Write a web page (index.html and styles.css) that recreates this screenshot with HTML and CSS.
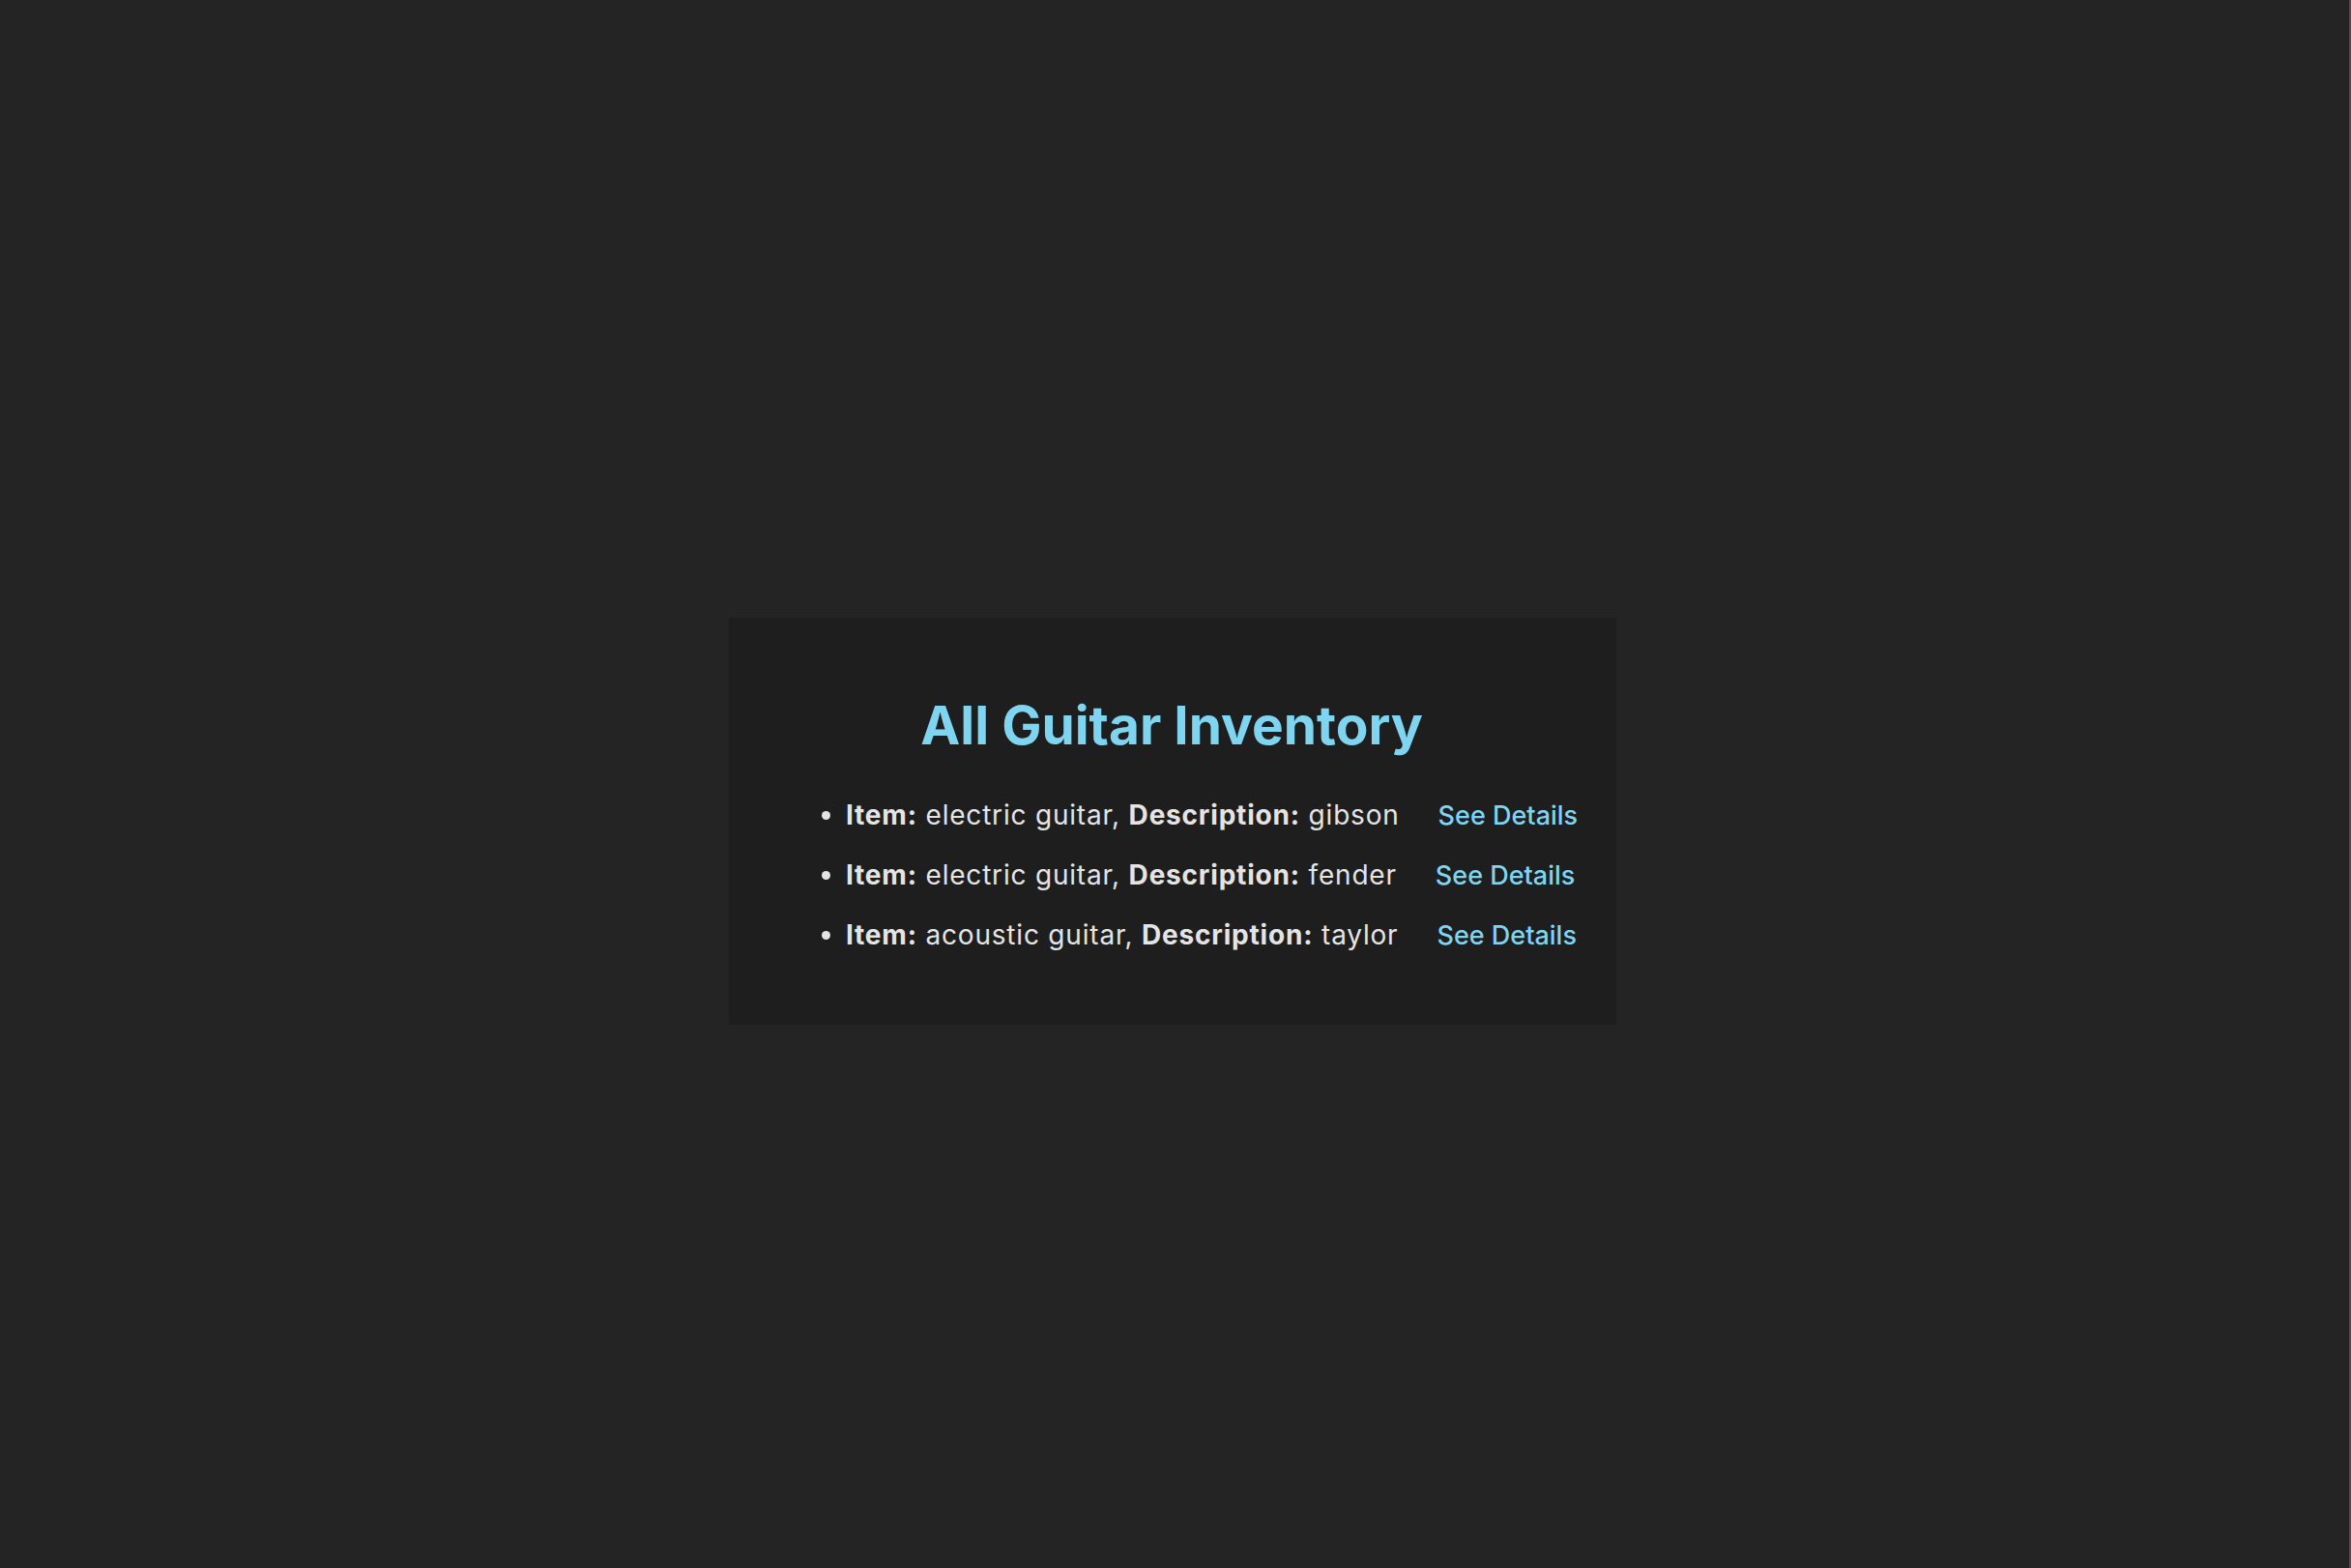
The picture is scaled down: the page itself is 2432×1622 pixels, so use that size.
FILE: index.html
```html
<!DOCTYPE html>
<html lang="en">
<head>
<meta charset="utf-8">
<title>All Guitar Inventory</title>
<link rel="stylesheet" href="styles.css">
</head>
<body>
<main class="page">
  <section class="card">
    <h1 class="title">All Guitar Inventory</h1>
    <ul class="inventory">
      <li class="row"><span class="desc"><b>Item:</b> electric guitar, <b>Description:</b> gibson</span><a class="link" href="#">See Details</a></li>
      <li class="row"><span class="desc"><b>Item:</b> electric guitar, <b>Description:</b> fender</span><a class="link" href="#">See Details</a></li>
      <li class="row"><span class="desc"><b>Item:</b> acoustic guitar, <b>Description:</b> taylor</span><a class="link" href="#">See Details</a></li>
    </ul>
  </section>
</main>
</body>
</html>
```

FILE: styles.css
```css
html {
  background: #242424;
  border-right: 2px solid #4a4a4a;
  min-height: 100%;
}
body {
  margin: 0;
  min-height: 1622px;
  background: #242424;
  font-family: Inter, "Noto Sans", sans-serif;
  color: #e4e4e4;
}
.page {
  display: flex;
  justify-content: center;
  padding-top: 639px;
  padding-right: 4px;
}
.card {
  background: #1e1e1e;
  width: 918px;
  box-sizing: border-box;
  padding: 78px 30px 71px 81px;
}
.title {
  margin: 0 0 38px;
  text-align: center;
  padding-right: 53px;
  font-size: 55px;
  font-weight: 700;
  line-height: 67px;
  color: #7fd4ef;
}
.inventory {
  margin: 0;
  padding-left: 40px;
  font-size: 28px;
  line-height: 42px;
}
.row {
  margin-bottom: 19px;
  white-space: nowrap;
}
.row:last-child {
  margin-bottom: 0;
}
.row::marker {
  color: #e4e4e4;
}
.desc {
  letter-spacing: 0.8px;
}
.desc b {
  font-weight: 700;
}
.link {
  margin-left: 40px;
  color: #7fd4ef;
  font-weight: 500;
  font-size: 27px;
  text-decoration: none;
}
```
